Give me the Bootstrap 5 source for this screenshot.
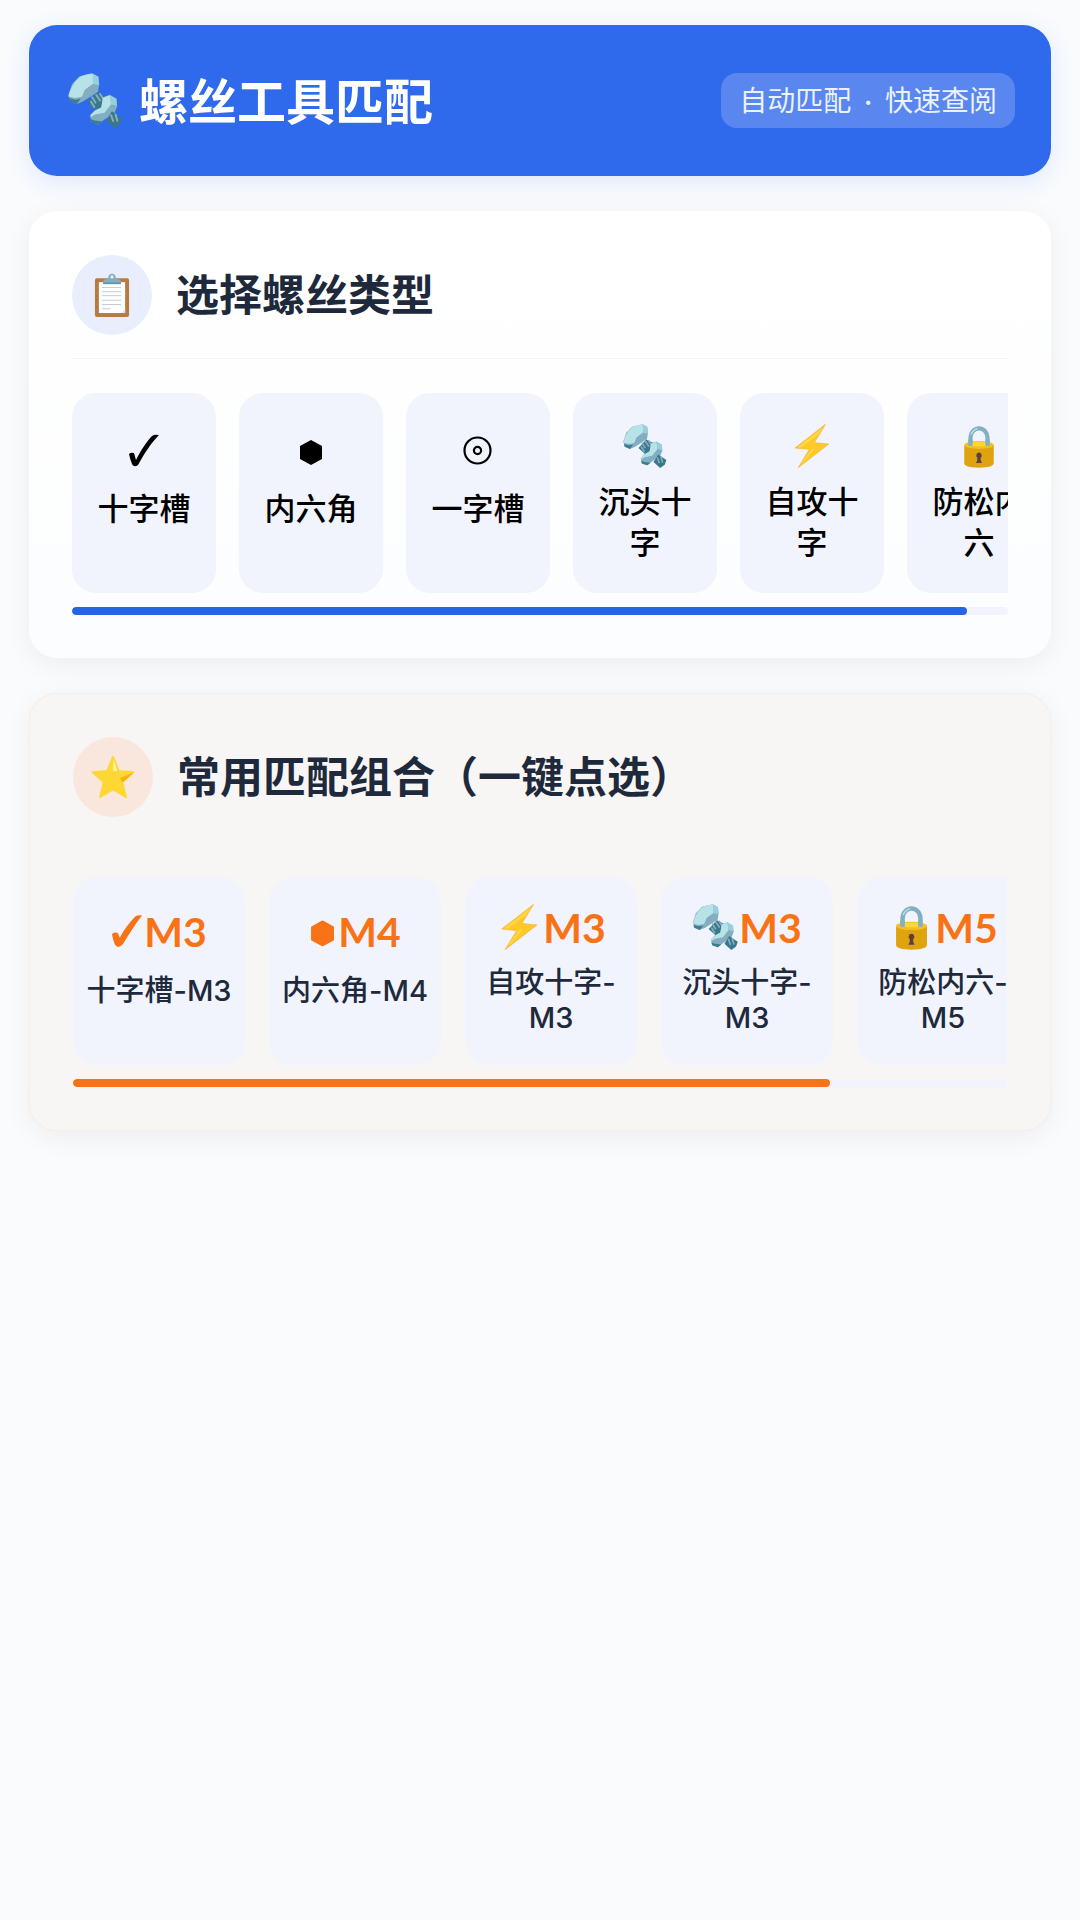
<!DOCTYPE html>
<html lang="zh-CN">
<head>
<meta charset="utf-8">
<meta name="viewport" content="width=device-width, initial-scale=1">
<title>螺丝工具匹配</title>
<link href="https://cdn.jsdelivr.net/npm/bootstrap@5.3.0/dist/css/bootstrap.min.css" rel="stylesheet">
<style>
  body { background: #f9fbfd; color: #1e293b; font-family: Lato, "Noto Sans CJK SC", sans-serif; min-height: 100vh; }
  .page { padding: 25px 29px; gap: 35px; }
  .topbar { background: #306aec; border-radius: 28px; padding: 36px 36px 36px 39px; min-height: 151px; box-shadow: 0 6px 24px rgba(48, 106, 236, .13); }
  .topbar h1 { font-size: 49px; line-height: 60px; font-weight: 700; gap: 16px; }
  .topbar h1 svg { width: 55px; height: 55px; }
  .tagline { background: rgba(255, 255, 255, .2); color: #eaf2fe; border-radius: 16px; font-size: 28px; line-height: 35px; padding: 10px 18px; }
  .tagline-dot { margin: 0 6px; }
  .panel { background: linear-gradient(#fff, #fcfdfe); border-radius: 28px; padding: 44px 43px 43px; box-shadow: 0 6px 28px rgba(15, 23, 42, .06); }
  .panel-warm { background: #f7f6f4; border: 1px solid #f8eee5; padding: 43px 43px 43px; }
  .panel-head { gap: 24px; padding-bottom: 23px; margin-bottom: 34px; border-bottom: 1px solid #f2f5f9; }
  .panel-warm .panel-head { border-color: transparent; padding-bottom: 25px; }
  .panel-head h2 { font-size: 43px; line-height: 60px; font-weight: 600; }
  .disc { width: 80px; height: 80px; background: #e8eefb; }
  .disc svg { width: 44px; height: 44px; }
  .panel-warm .disc { background: #f9e7de; }
  .scroller { overflow-x: auto; scrollbar-width: none; gap: 23px; margin-bottom: 14px; }
  .scroller::-webkit-scrollbar { display: none; }
  .scroller-wide { gap: 24px; }
  .tile { background: #f1f4fc; border: 0; border-radius: 24px; font-weight: 500; }
  .tile-type { width: 144px; height: 200px; padding: 31px 20px 0; color: #000; font-size: 31px; line-height: 41px; }
  .tile-type svg { width: 44px; height: 44px; margin-bottom: 13px; }
  .tile-type .tall { height: 51px; }
  .tile-combo { width: 172px; height: 188px; padding: 25px 10px 0; color: #1e293b; font-family: Inter, "Noto Sans CJK SC", sans-serif; font-size: 29px; line-height: 35px; }
  .combo-size { color: #f97316; font-family: Lato, sans-serif; font-size: 41px; font-weight: 700; height: 50px; margin-bottom: 13px; }
  .combo-size.tall { height: 58px; }
  .combo-size svg { width: 47px; height: 46px; }
  .combo-size .mark-check { width: 33px; height: 36px; }
  .combo-size .mark-hex { width: 29px; height: 34px; }
  .progress { height: 8px; border-radius: 4px; background: #f1f4fc; }
  .progress-bar { border-radius: 4px; background: #2563eb; }
  .panel-warm .progress-bar { background: #f97316; }
</style>
<script src="https://cdn.jsdelivr.net/npm/bootstrap@5.3.0/dist/js/bootstrap.bundle.min.js" defer></script>
</head>
<body>
<svg class="d-none" aria-hidden="true">
  <symbol id="screw" viewBox="0 0 132 134">
    <path fill="#83adc0" d="M58 1 73 9 75 28 72 46 36 69 20 76 4 68 0 53 9 27 27 8Z"/>
    <path fill="#b6e2e8" d="M58 1Q38 3 26 11 14 21 8 34 2 46 0 57L16 61 33 58 40 41 60 26 60 5Z"/>
    <path fill="#94d0df" d="M59 1 73 9 75 29 60 27Z"/>
    <path fill="#397f90" d="M2 61 17 65 30 63 20 76 4 69Z"/>
    <path fill="#39788a" d="M70 47 91 58 84 80 67 92 46 73Z"/>
    <path fill="none" stroke="#83adc0" stroke-width="5" stroke-linecap="round" d="M58 59 66 72M68 54 77 67M77 51 86 65M55 70 63 83"/>
    <path fill="#83adc0" d="M84 59 101 53 117 63 119 81 112 98 87 114 73 126 56 119 53 104 63 92 80 84Z"/>
    <path fill="#b6e2e8" d="M84 60 101 54 104 76 88 97 65 101 54 108 54 102 66 91 80 84Z"/>
    <path fill="#94d0df" d="M101 54 117 63 118 80 104 76Z"/>
    <path fill="#397f90" d="M54 112 64 116 83 118 73 126 57 121Z"/>
    <path fill="#39788a" d="M106 93 131 110 126 124 112 134 92 116Z"/>
    <path fill="none" stroke="#83adc0" stroke-width="5" stroke-linecap="round" d="M104 103 109 117M115 101 119 116"/>
  </symbol>
  <symbol id="bolt" viewBox="0 0 132 134">
    <path fill="#ffca28" stroke="#f7b03c" stroke-width="2" stroke-linejoin="round" d="M107 1 14 73 58 77 24 133 117 61 73 57Z"/>
    <path fill="#fff176" opacity=".4" d="M99 11 22 71 31 72 82 34ZM65 76 31 123 42 115 75 74Z"/>
  </symbol>
  <symbol id="lock" viewBox="0 0 132 134">
    <path fill="none" stroke="#82afc2" stroke-width="13" d="M40 66V42A26 29 0 0 1 92 42V66"/>
    <path fill="none" stroke="#b9e4ea" stroke-width="4" stroke-linecap="round" d="M42 31Q48 18 60 14"/>
    <path fill="#dfa30f" d="M21 65V119Q21 133 66 133T111 119V65Z"/>
    <ellipse cx="66" cy="64" rx="45" ry="12" fill="#f4bf24"/>
    <ellipse cx="66" cy="61" rx="28" ry="7" fill="#fdd835"/>
    <path fill="none" stroke="#82afc2" stroke-width="13" d="M40 66V48M92 66V48"/>
    <path fill="#5d4037" d="M66 87A9 9 0 0 1 71 103V110L75 119H57L61 110V103A9 9 0 0 1 66 87Z"/>
  </symbol>
  <symbol id="clipboard" viewBox="0 0 132 134">
    <rect x="14" y="16" width="104" height="118" rx="6" fill="#ba793e"/>
    <path fill="#fff" d="M26 28H106V122H26Z"/>
    <path fill="#e2e5ea" d="M95 122 106 110V122Z"/>
    <path stroke="#c5cbd4" stroke-width="3" d="M35 44H94M35 57H94M35 69H94M35 83H94M35 96H94M35 109H62"/>
    <path fill="#82aec0" d="M39 33V25Q40 19 55 17V11Q57 2 66 2T77 11V17Q92 19 93 25V33Z"/>
    <circle cx="66" cy="12" r="5" fill="#e8eefb"/>
    <path fill="#5d93a6" d="M39 29H93V34H39Z"/>
  </symbol>
  <symbol id="star" viewBox="0 0 132 134">
    <path fill="#fdd835" stroke="#fdd835" stroke-width="5" stroke-linejoin="round" d="M66 5 84 48 129 52 95 83 106 129 66 105 26 129 37 83 3 52 48 48Z"/>
    <path fill="#f4b400" d="M129 53 88 70Q89 80 97 83Z"/>
    <path fill="#fff59d" d="M68 13 66 46Q72 53 79 47Z"/>
  </symbol>
  <symbol id="check" viewBox="0 0 30 33">
    <path fill="currentColor" d="M30 1C22 9 15 20 9 31Q5 34 3 30 1 25 0 20 2 18 5 19L7 26C12 16 18 7 23 2Q26 0 30 1Z"/>
  </symbol>
  <symbol id="check-fat" viewBox="0 0 34 36">
    <path fill="currentColor" d="M32 2C25 11 18 22 12 32Q7 37 4 32 2 27 1 21 4 19 7 20L9 25C13 17 19 9 25 3Q28 1 32 2Z"/>
  </symbol>
  <symbol id="hex" viewBox="0 0 22 25">
    <path fill="currentColor" d="M11 0 22 6V19L11 25 0 19V6Z"/>
  </symbol>
  <symbol id="ring" viewBox="0 0 29 29">
    <g fill="none" stroke="currentColor" stroke-width="2.2"><circle cx="14.5" cy="14.5" r="13"/><circle cx="14.5" cy="14.5" r="3.6"/></g>
  </symbol>
</svg>

<main class="page container-fluid d-flex flex-column">
  <header class="topbar d-flex align-items-center justify-content-between">
    <h1 class="d-flex align-items-center text-white m-0"><svg aria-hidden="true"><use href="#screw"/></svg>螺丝工具匹配</h1>
    <span class="tagline">自动匹配<span class="tagline-dot"> · </span>快速查阅</span>
  </header>

  <section class="panel">
    <div class="panel-head d-flex align-items-center">
      <span class="disc rounded-circle d-flex align-items-center justify-content-center flex-shrink-0"><svg aria-hidden="true"><use href="#clipboard"/></svg></span>
      <h2 class="m-0">选择螺丝类型</h2>
    </div>
    <div class="scroller d-flex">
      <button type="button" class="tile tile-type d-flex flex-column align-items-center flex-shrink-0"><svg class="tall" viewBox="0 0 44 51" aria-hidden="true"><use href="#check" x="7" y="10" width="30" height="33"/></svg><span>十字槽</span></button>
      <button type="button" class="tile tile-type d-flex flex-column align-items-center flex-shrink-0"><svg class="tall" viewBox="0 0 44 51" aria-hidden="true"><use href="#hex" x="11" y="16" width="22" height="25"/></svg><span>内六角</span></button>
      <button type="button" class="tile tile-type d-flex flex-column align-items-center flex-shrink-0"><svg class="tall" viewBox="0 0 44 51" aria-hidden="true"><use href="#ring" x="7" y="12" width="29" height="29"/></svg><span>一字槽</span></button>
      <button type="button" class="tile tile-type d-flex flex-column align-items-center flex-shrink-0"><svg aria-hidden="true"><use href="#screw"/></svg><span>沉头十字</span></button>
      <button type="button" class="tile tile-type d-flex flex-column align-items-center flex-shrink-0"><svg aria-hidden="true"><use href="#bolt"/></svg><span>自攻十字</span></button>
      <button type="button" class="tile tile-type d-flex flex-column align-items-center flex-shrink-0"><svg aria-hidden="true"><use href="#lock"/></svg><span>防松内六</span></button>
    </div>
    <div class="progress" role="progressbar" aria-label="螺丝类型" aria-valuenow="96" aria-valuemin="0" aria-valuemax="100"><div class="progress-bar" style="width: 95.6%"></div></div>
  </section>

  <section class="panel panel-warm">
    <div class="panel-head d-flex align-items-center">
      <span class="disc rounded-circle d-flex align-items-center justify-content-center flex-shrink-0"><svg aria-hidden="true"><use href="#star"/></svg></span>
      <h2 class="m-0">常用匹配组合（一键点选）</h2>
    </div>
    <div class="scroller scroller-wide d-flex">
      <button type="button" class="tile tile-combo d-flex flex-column align-items-center flex-shrink-0"><span class="combo-size tall d-flex align-items-center"><svg class="mark-check" aria-hidden="true"><use href="#check-fat"/></svg>M3</span><span>十字槽-M3</span></button>
      <button type="button" class="tile tile-combo d-flex flex-column align-items-center flex-shrink-0"><span class="combo-size tall d-flex align-items-center"><svg class="mark-hex" viewBox="0 0 30 34" aria-hidden="true"><use href="#hex" x="2" y="6" width="24" height="27"/></svg>M4</span><span>内六角-M4</span></button>
      <button type="button" class="tile tile-combo d-flex flex-column align-items-center flex-shrink-0"><span class="combo-size d-flex align-items-center"><svg aria-hidden="true"><use href="#bolt"/></svg>M3</span><span>自攻十字-M3</span></button>
      <button type="button" class="tile tile-combo d-flex flex-column align-items-center flex-shrink-0"><span class="combo-size d-flex align-items-center"><svg aria-hidden="true"><use href="#screw"/></svg>M3</span><span>沉头十字-M3</span></button>
      <button type="button" class="tile tile-combo d-flex flex-column align-items-center flex-shrink-0"><span class="combo-size d-flex align-items-center"><svg aria-hidden="true"><use href="#lock"/></svg>M5</span><span>防松内六-M5</span></button>
    </div>
    <div class="progress" role="progressbar" aria-label="常用匹配组合" aria-valuenow="81" aria-valuemin="0" aria-valuemax="100"><div class="progress-bar" style="width: 81%"></div></div>
  </section>
</main>
</body>
</html>
